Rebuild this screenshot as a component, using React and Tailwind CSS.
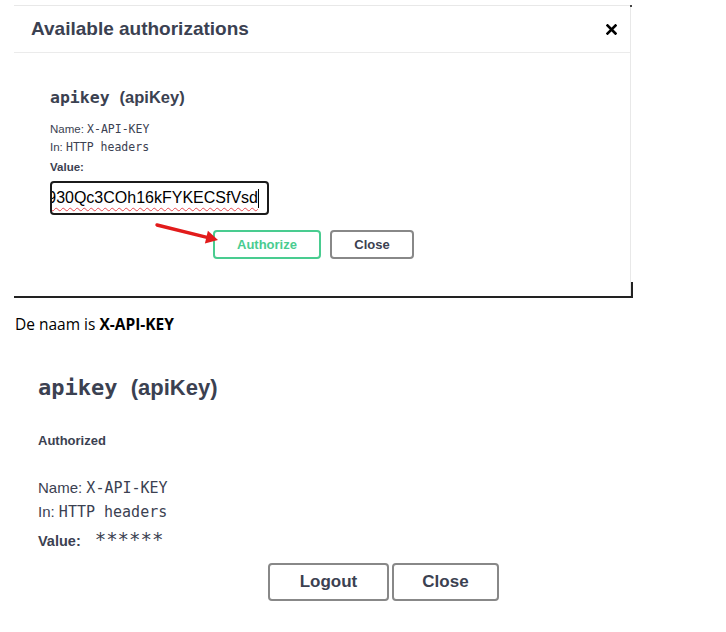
const sans = "font-['Liberation_Sans',Arial,sans-serif]";
const mono = "font-['DejaVu_Sans_Mono',monospace]";

function CloseIcon() {
  return (
    <svg width="11" height="11" viewBox="0 0 11 11" className="block">
      <path d="M1.5 1.5 L9.5 9.5 M9.5 1.5 L1.5 9.5" stroke="#000" strokeWidth="2.6" strokeLinecap="square" />
    </svg>
  );
}

function RedArrow() {
  return (
    <svg width="72" height="34" viewBox="0 0 72 34" className="absolute left-[136px] top-[167px]">
      <line x1="7" y1="5" x2="57" y2="17.3" stroke="#e21b1b" strokeWidth="3.4" strokeLinecap="round" />
      <polygon points="68,20 54.9,23.4 57.9,10.8" fill="#e21b1b" />
    </svg>
  );
}

function AuthDialog() {
  return (
    <div className="relative ml-[14px] mt-[5px] w-[619px] border-b-2 border-[#222]">
      <div className="h-[291px] w-[617px] border-t border-r border-[#e8e8e8]">
        <div className="flex h-[47px] items-center justify-between border-b border-[#ebebeb] pl-[17px] pr-[13px]">
          <h3 className="text-[19px] font-bold text-[#3b4151]">Available authorizations</h3>
          <CloseIcon />
        </div>

        <div className="relative pl-[36px] pt-[34px]">
          <h4 className="text-[16.5px] font-bold leading-[20px] text-[#3b4151]">
            <code className={mono}>apikey&nbsp;</code>(apiKey)
          </h4>
          <div className="mt-[12px] text-[11.5px] leading-[18px] text-[#3b4151]">
            <p>Name: <code className={mono}>X-API-KEY</code></p>
            <p>In: <code className={mono}>HTTP headers</code></p>
          </div>
          <label className="mt-[2px] block text-[11.5px] font-bold leading-[18px] text-[#3b4151]">Value:</label>
          <div className="mt-[5px] flex h-[34px] w-[219px] items-center justify-end overflow-hidden rounded-[4px] border-2 border-[#1b1b1b] pr-[8px]">
            <span className="shrink-0 whitespace-nowrap text-[16px] text-black underline decoration-[#e5484d] decoration-wavy decoration-1 underline-offset-[4px]">
              aQ4z930Qc3COh16kFYKECSfVsd
            </span>
            <span className="h-[19px] w-px shrink-0 bg-black" />
          </div>

          <div className="mt-[15px] flex gap-[9px] pl-[163px]">
            <button className="h-[29px] w-[108px] rounded-[4px] border-2 border-[#49cc90] text-[13px] font-bold text-[#49cc90]">
              Authorize
            </button>
            <button className="h-[29px] w-[84px] rounded-[4px] border-2 border-[#888] text-[13px] font-bold text-[#3b4151]">
              Close
            </button>
          </div>

          <RedArrow />
        </div>
      </div>
      <span className="absolute right-0 bottom-0 h-[14px] w-[2px] bg-[#222]" />
      <span className="absolute right-[1px] top-0 h-[2px] w-[2px] bg-[#444]" />
    </div>
  );
}

function AuthorizedBlock() {
  return (
    <div className="pl-[38px] text-[#3b4151]">
      <h4 className="mt-[40px] text-[22px] font-bold leading-[28px]">
        <code className={mono}>apikey&nbsp;</code>(apiKey)
      </h4>
      <h6 className="mt-[31px] text-[13px] font-bold leading-[16px]">Authorized</h6>
      <div className="mt-[27px] text-[15px] leading-[24px]">
        <p>Name: <code className={mono}>X-API-KEY</code></p>
        <p>In: <code className={mono}>HTTP headers</code></p>
      </div>
      <p className="mt-[5px] text-[14.5px] leading-[24px]">
        <span className="font-bold">Value:</span>
        <code className={`${mono} ml-[14px] text-[19px] leading-none`}>******</code>
      </p>
      <div className="mt-[10px] flex gap-[3px] pl-[230px]">
        <button className="h-[38px] w-[121px] rounded-[4px] border-2 border-[#888] text-[17px] font-bold text-[#3b4151]">
          Logout
        </button>
        <button className="h-[38px] w-[107px] rounded-[4px] border-2 border-[#888] text-[17px] font-bold text-[#3b4151]">
          Close
        </button>
      </div>
    </div>
  );
}

export default function App() {
  return (
    <div className={`min-h-screen bg-white ${sans}`}>
      <AuthDialog />
      <p className="ml-[15px] mt-[16px] font-['Open_Sans',sans-serif] text-[15.5px] leading-[20px] text-black">
        De naam is <b>X-API-KEY</b>
      </p>
      <AuthorizedBlock />
    </div>
  );
}
